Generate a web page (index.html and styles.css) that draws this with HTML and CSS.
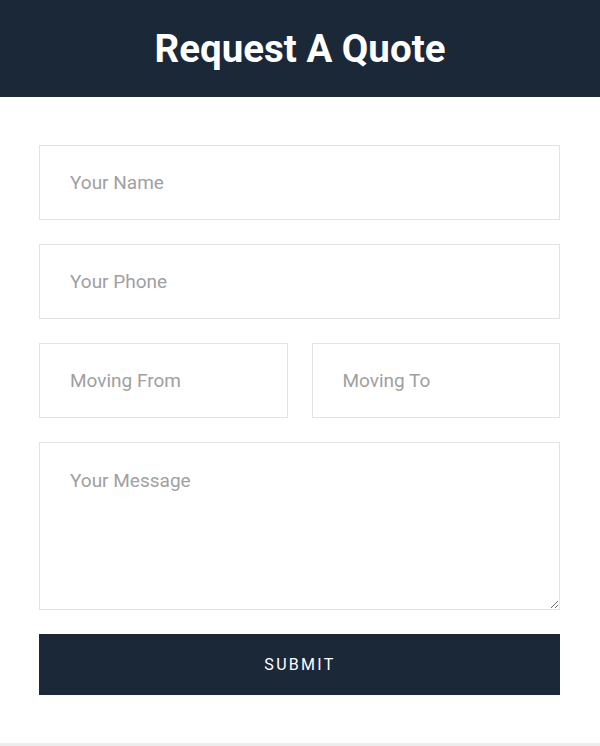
FILE: index.html
```html
<!DOCTYPE html>
<html>
<head>
<meta charset="utf-8">
<link rel="stylesheet" href="styles.css">
</head>
<body>
<header class="hero">
  <h1 class="title">Request A Quote</h1>
</header>
<main class="quote">
  <form class="quote-form">
    <input class="field" type="text" placeholder="Your Name">
    <input class="field" type="text" placeholder="Your Phone">
    <div class="row">
      <input class="field" type="text" placeholder="Moving From">
      <input class="field" type="text" placeholder="Moving To">
    </div>
    <textarea class="field message" placeholder="Your Message"></textarea>
    <button class="submit" type="button">SUBMIT</button>
  </form>
</main>
<div class="footer-line"></div>
</body>
</html>
```
FILE: styles.css
```css
* { box-sizing: border-box; }
html, body { margin: 0; padding: 0; background: #fff; }
body { font-family: Roboto, "Liberation Sans", sans-serif; }
.hero {
  background: #1a2838;
  height: 97px;
  display: flex;
  align-items: center;
  justify-content: center;
}
.title {
  margin: 0;
  color: #fff;
  font-size: 38.5px;
  font-weight: 700;
  line-height: 1;
  padding-top: 2px;
}
.quote { padding: 48px 40px 48px 39px; }
.quote-form { display: flex; flex-direction: column; gap: 24px; }
.row { display: grid; grid-template-columns: 1fr 1fr; gap: 24px; }
.field {
  display: block;
  width: 100%;
  height: 75px;
  border: 1px solid #e3e3e3;
  background: #fff;
  padding: 0 30px;
  font-family: Roboto, "Liberation Sans", sans-serif;
  font-size: 19px;
  color: #333;
  outline: none;
  border-radius: 0;
}
.field::placeholder { color: #a0a0a0; }
.message {
  height: 168px;
  padding-top: 26px;
  resize: vertical;
}
.submit {
  height: 61px;
  border: 0;
  background: #1a2838;
  color: #fff;
  font-family: Roboto, "Liberation Sans", sans-serif;
  font-size: 16px;
  letter-spacing: 2.3px;
  font-weight: 400;
  border-radius: 0;
  padding-left: 7px;
}
.footer-line { height: 4px; background: #ececec; }
```
